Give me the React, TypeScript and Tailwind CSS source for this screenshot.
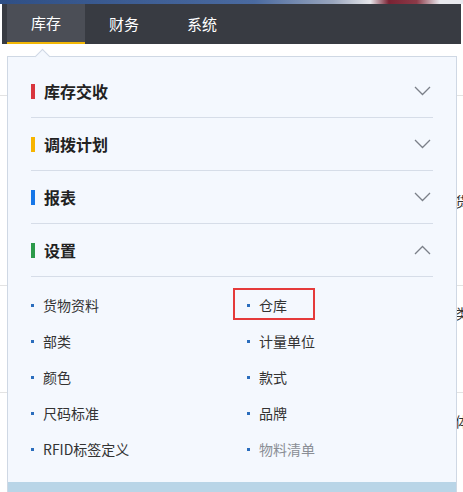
import React from "react";

const sections = [
  { title: "库存交收", color: "bg-[#d9363e]", open: false },
  { title: "调拨计划", color: "bg-[#f7b500]", open: false },
  { title: "报表", color: "bg-[#1677e8]", open: false },
  { title: "设置", color: "bg-[#2b9a4a]", open: true },
];

const items = [
  { name: "货物资料" },
  { name: "仓库", marked: true },
  { name: "部类" },
  { name: "计量单位" },
  { name: "颜色" },
  { name: "款式" },
  { name: "尺码标准" },
  { name: "品牌" },
  { name: "RFID标签定义" },
  { name: "物料清单", disabled: true },
];

function Chevron({ up }: { up: boolean }) {
  return (
    <svg width="17" height="10" viewBox="0 0 17 10" className="mr-[2px]">
      <polyline
        points={up ? "1,9 8.5,1.5 16,9" : "1,1 8.5,8.5 16,1"}
        fill="none"
        stroke="#7b8089"
        strokeWidth="1.3"
      />
    </svg>
  );
}

export default function App() {
  return (
    <div
      className="relative w-[463px] h-[492px] bg-white overflow-hidden"
      style={{ fontFamily: '"Noto Sans CJK SC", "Noto Sans", sans-serif' }}
    >
      <div className="h-[4px] bg-[linear-gradient(90deg,#2f4f85_0%,#4a6aa0_55%,#9aa6bd_72%,#e6e6ea_80%,#7a2233_84%,#8c3a48_90%,#e9e9ee_95%)]" />

      <nav className="mx-[2px] h-[40px] bg-[#383b42] flex text-[15px] text-white">
        <div className="ml-[5px] w-[78px] bg-[#4b4e56] border-b-2 border-[#f2b705] flex items-center justify-center pt-[1px]">
          库存
        </div>
        <div className="w-[78px] flex items-center justify-center">财务</div>
        <div className="w-[78px] flex items-center justify-center">系统</div>
      </nav>

      {/* page content behind the menu */}
      <div className="text-[14px] text-[#333]">
        <div className="h-[52px] border-b border-[#e3e3e3]" />
        <div className="h-[190px] border-b border-[#e3e3e3] pl-[455px] pt-[95px] leading-[20px]">
          货
        </div>
        <div className="h-[107px] border-b border-[#e3e3e3] pl-[455px] pt-[17px] leading-[20px]">
          类
        </div>
        <div className="pl-[455px] pt-[18px] leading-[20px]">体</div>
      </div>

      {/* dropdown panel */}
      <div className="absolute left-[7px] top-[56px] bottom-0 w-[450px] border border-b-0 border-[#cfd8e4] bg-[#f4f8fe] flex flex-col">
        <div className="absolute -top-[6px] left-[29px] w-[11px] h-[11px] rotate-45 bg-[#f4f8fe] border-l border-t border-[#cfd8e4]" />
        <div className="px-[23px] pt-[8px]">
          {sections.map((s) => (
            <div
              key={s.title}
              className="h-[53px] border-b border-[#d6dde8] flex items-center"
            >
              <span className={"w-[4px] h-[15px] mr-[9px] " + s.color} />
              <span className="flex-1 text-[16px] font-bold text-[#222]">
                {s.title}
              </span>
              <Chevron up={s.open} />
            </div>
          ))}
          <div className="grid grid-cols-[216px_1fr] pt-[10px]">
            {items.map((it) => (
              <div
                key={it.name}
                className={
                  "relative h-[36px] flex items-center text-[14px] " +
                  (it.disabled ? "text-[#8a8e95]" : "text-[#333]")
                }
              >
                <span className="w-[3px] h-[3px] bg-[#2a6dbd] mr-[9px]" />
                {it.name}
                {it.marked && (
                  <div className="absolute -left-[14px] top-[1px] w-[82px] h-[32px] border-2 border-[#e53a3a]" />
                )}
              </div>
            ))}
          </div>
        </div>
        <div className="mt-auto h-[10px] bg-[#b9d5e7]" />
      </div>
    </div>
  );
}
